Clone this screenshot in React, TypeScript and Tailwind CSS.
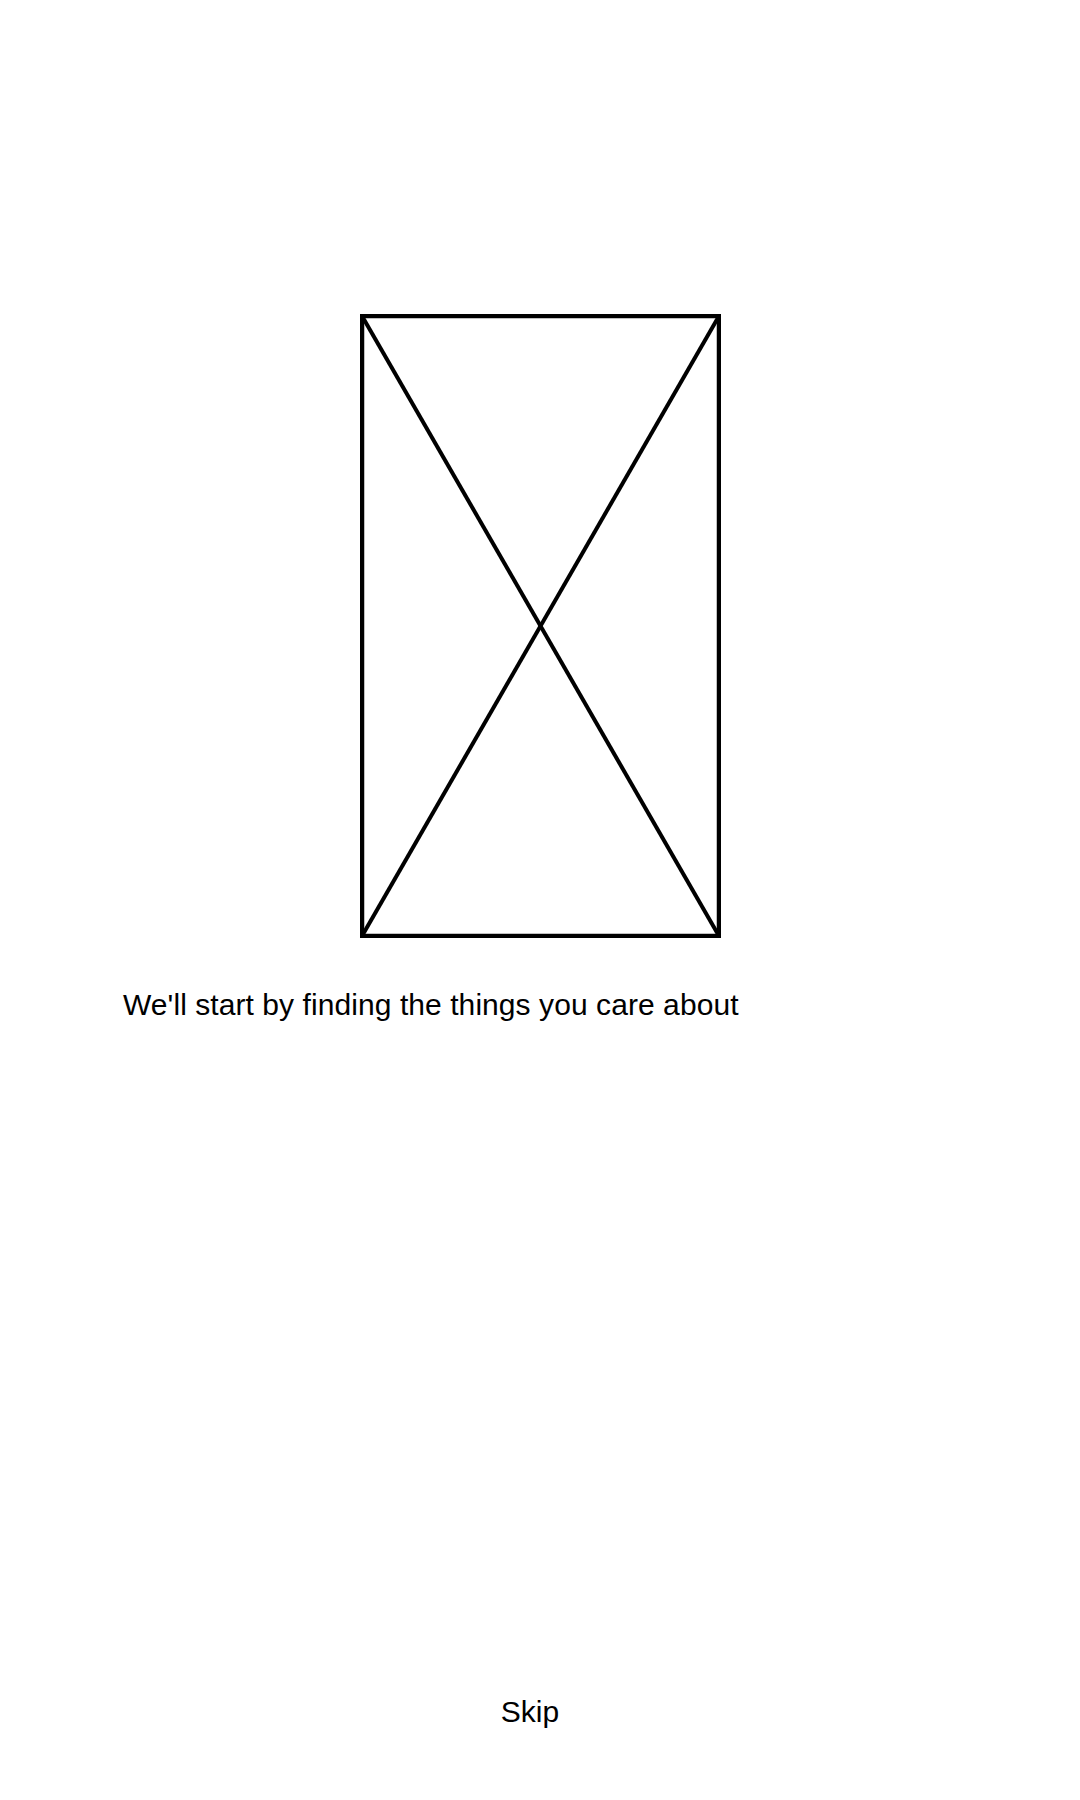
export default function App() {
  return (
    <div className="w-[1080px] h-[1800px] bg-white flex flex-col font-['Liberation_Sans',Arial,sans-serif] text-black">

      {/* Placeholder image */}
      <div className="pt-[314px] flex justify-center">
        <svg width="361" height="624" viewBox="0 0 361 624" className="block">
          <rect x="2" y="2" width="357" height="620" fill="none" stroke="#000" strokeWidth="4.5" />
          <line x1="2" y1="2" x2="359" y2="622" stroke="#000" strokeWidth="4" />
          <line x1="359" y1="2" x2="2" y2="622" stroke="#000" strokeWidth="4" />
        </svg>
      </div>

      {/* Caption */}
      <p className="mt-[50px] pl-[123px] text-[30px] leading-[34px] tracking-[0.07px]">
        We'll start by finding the things you care about
      </p>

      {/* Skip */}
      <div className="mt-auto pb-[71px] flex justify-center">
        <button className="text-[30px] leading-[34px] pr-[20px]">Skip</button>
      </div>
    </div>
  )
}
